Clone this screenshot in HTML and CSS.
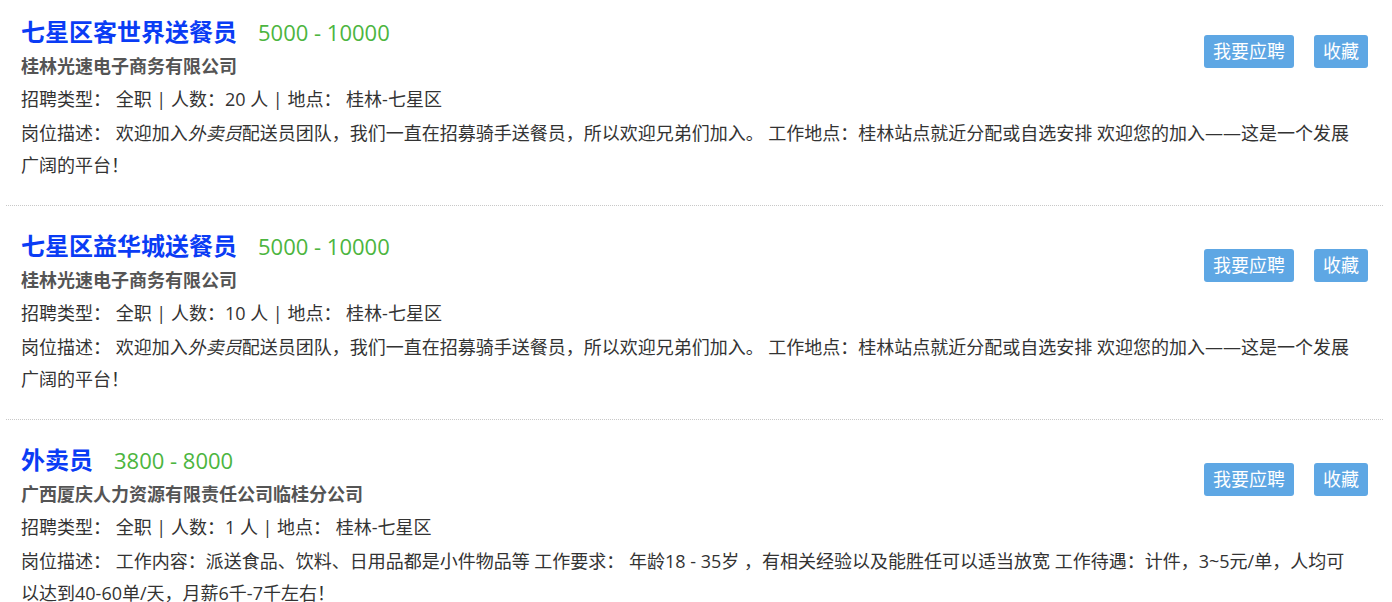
FILE: index.html
```html
<!DOCTYPE html>
<html lang="zh-CN">
  <head>
    <meta charset="utf-8">
    <meta name="viewport" content="width=device-width, initial-scale=1">
    <link rel="stylesheet" href="styles.css">
  </head>
  <body>
    <div id="jobList">
      <div class="job">
        <div class="jobHead">
          <div class="jobInfo">
            <div class="jobTitle"><a href="#">七星区客世界送餐员</a><span class="salary">5000 - 10000</span></div>
            <div class="company">桂林光速电子商务有限公司</div>
            <div class="meta">招聘类型： 全职 | 人数：20 人 | 地点： 桂林-七星区</div>
          </div>
          <div class="jobActions">
            <button class="btn">我要应聘</button>
            <button class="btn">收藏</button>
          </div>
        </div>
        <div class="desc">岗位描述： 欢迎加入<em>外卖员</em>配送员团队，我们一直在招募骑手送餐员，所以欢迎兄弟们加入。 工作地点：桂林站点就近分配或自选安排 欢迎您的加入——这是一个发展广阔的平台！</div>
      </div>
      <div class="job">
        <div class="jobHead">
          <div class="jobInfo">
            <div class="jobTitle"><a href="#">七星区益华城送餐员</a><span class="salary">5000 - 10000</span></div>
            <div class="company">桂林光速电子商务有限公司</div>
            <div class="meta">招聘类型： 全职 | 人数：10 人 | 地点： 桂林-七星区</div>
          </div>
          <div class="jobActions">
            <button class="btn">我要应聘</button>
            <button class="btn">收藏</button>
          </div>
        </div>
        <div class="desc">岗位描述： 欢迎加入<em>外卖员</em>配送员团队，我们一直在招募骑手送餐员，所以欢迎兄弟们加入。 工作地点：桂林站点就近分配或自选安排 欢迎您的加入——这是一个发展广阔的平台！</div>
      </div>
      <div class="job">
        <div class="jobHead">
          <div class="jobInfo">
            <div class="jobTitle"><a href="#">外卖员</a><span class="salary">3800 - 8000</span></div>
            <div class="company">广西厦庆人力资源有限责任公司临桂分公司</div>
            <div class="meta">招聘类型： 全职 | 人数：1 人 | 地点： 桂林-七星区</div>
          </div>
          <div class="jobActions">
            <button class="btn">我要应聘</button>
            <button class="btn">收藏</button>
          </div>
        </div>
        <div class="desc">岗位描述： 工作内容：派送食品、饮料、日用品都是小件物品等 工作要求： 年龄18 - 35岁 ，有相关经验以及能胜任可以适当放宽 工作待遇：计件，3~5元/单，人均可以达到40-60单/天，月薪6千-7千左右！</div>
      </div>
    </div>
  </body>
</html>
```

FILE: styles.css
```css
body {
  margin: 0;
  color: #333;
  background: #fff;
  font-family: "Open Sans", "Noto Sans CJK SC", sans-serif;
  font-size: 18px;
  overflow: hidden;
}
#jobList {
  margin: 0 9px 0 6px;
}
.job {
  padding: 22px 15px 24px 15px;
  border-bottom: 1px dotted #c8c8c8;
}
.job:first-child {
  padding-top: 14px;
}
.jobHead {
  display: flex;
  align-items: flex-start;
}
.jobInfo {
  flex: 1;
}
.jobTitle {
  line-height: 36px;
  height: 36px;
}
.jobTitle a {
  color: #0a3cf5;
  font-size: 24px;
  font-weight: bold;
  text-decoration: none;
}
.salary {
  color: #4cb540;
  font-size: 22px;
  margin-left: 21px;
}
.company {
  color: #555;
  font-weight: bold;
  line-height: 33px;
}
.meta {
  line-height: 33px;
}
.desc {
  line-height: 32px;
  padding: 1px 12px 0 0;
}
.desc em {
  font-style: italic;
}
.jobActions {
  display: flex;
  gap: 20px;
  margin-top: 21px;
}
.btn {
  height: 33px;
  padding: 0 9px;
  color: white;
  background: #5ea7e4;
  border: none;
  border-radius: 3px;
  font-family: inherit;
  font-size: 18px;
  line-height: 33px;
  cursor: pointer;
}
```
